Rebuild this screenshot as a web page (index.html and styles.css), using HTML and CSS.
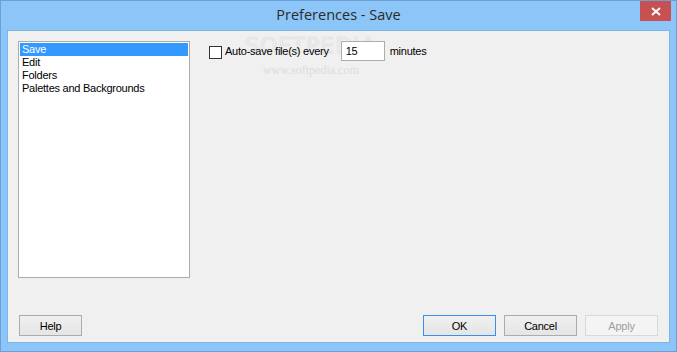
FILE: index.html
```html
<!DOCTYPE html>
<html lang="en">
<head>
    <meta charset="UTF-8">
    <title>Preferences - Save</title>
    <link rel="stylesheet" href="styles.css">
</head>
<body>
    <div class="window">
        <div class="titlebar">
            <span class="title">Preferences - Save</span>
            <button class="close" aria-label="Close">
                <svg width="10" height="9" viewBox="0 0 10 9"><path d="M1 1 L9 8 M9 1 L1 8" stroke="#fff" stroke-width="2"/></svg>
            </button>
        </div>
        <div class="client">
            <div class="mark">
                <span class="big">SOFTPEDIA</span>
                <span class="url">www.softpedia.com</span>
            </div>
            <div class="main">
                <ul class="pages">
                    <li class="selected">Save</li>
                    <li>Edit</li>
                    <li>Folders</li>
                    <li>Palettes and Backgrounds</li>
                </ul>
                <div class="options">
                    <label class="row">
                        <span class="check"></span>
                        <span class="label">Auto-save file(s) every</span>
                        <span class="field">15</span>
                        <span class="unit">minutes</span>
                    </label>
                </div>
            </div>
            <div class="buttons">
                <button class="btn">Help</button>
                <span class="spacer"></span>
                <button class="btn default">OK</button>
                <button class="btn">Cancel</button>
                <button class="btn" disabled>Apply</button>
            </div>
        </div>
    </div>
</body>
</html>
```

FILE: styles.css
```css
body{
    margin: 0;
    font-family: "Liberation Sans", Arial, sans-serif;
    font-size: 11px;
    letter-spacing: -0.25px;
    color: #000;
}
.window{
    width: 677px;
    height: 352px;
    box-sizing: border-box;
    background: #8cc5f7;
    border: 1px solid #6b9fd6;
    display: flex;
    flex-direction: column;
}
.titlebar{
    height: 29px;
    display: flex;
    align-items: flex-start;
    justify-content: center;
    position: relative;
}
.title{
    font-family: "Open Sans", "Noto Sans", sans-serif;
    font-size: 14.5px;
    letter-spacing: 0;
    color: #2b2b2b;
    margin-top: 4px;
}
.close{
    position: absolute;
    top: 0;
    right: 5px;
    width: 31px;
    height: 20px;
    border: none;
    background: #c75050;
    display: flex;
    align-items: center;
    justify-content: center;
    padding: 0;
}
.client{
    flex: 1;
    margin: 0 6px 8px 6px;
    background: #f0f0f0;
    border: 1px solid #7fb4e6;
    display: flex;
    flex-direction: column;
    padding: 10px 11px 6px 10px;
    position: relative;
}
.main{
    display: flex;
    gap: 19px;
    flex: 1;
    position: relative;
}
.pages{
    list-style: none;
    margin: 0;
    padding: 1px;
    width: 168px;
    height: 233px;
    background: #fff;
    border: 1px solid #acacac;
}
.pages li{
    height: 13px;
    line-height: 13px;
    padding-left: 2px;
}
.pages .selected{
    background: #3399ff;
    color: #fff;
}
.row{
    display: flex;
    align-items: center;
}
.check{
    width: 11px;
    height: 11px;
    border: 1px solid #333;
    background: #fff;
    margin-top: 2px;
}
.label{
    margin-left: 3px;
}
.field{
    width: 38px;
    height: 18px;
    line-height: 18px;
    border: 1px solid #abadb3;
    background: #fff;
    margin-left: 12px;
    padding-left: 4px;
}
.unit{
    margin-left: 5px;
}
.buttons{
    display: flex;
    gap: 8px;
    height: 21px;
}
.spacer{
    flex: 1;
}
.btn{
    width: 73px;
    height: 21px;
    box-sizing: border-box;
    font-family: "Liberation Sans", Arial, sans-serif;
    font-size: 11px;
    letter-spacing: -0.25px;
    background: linear-gradient(#f0f0f0, #e5e5e5);
    border: 1px solid #acacac;
    padding: 0;
    color: #000;
}
.btn:first-child{
    width: 63px;
    margin-left: 1px;
}
.btn.default{
    border-color: #3c8fe6;
}
.btn:disabled{
    color: #9e9e9e;
    background: #f4f4f4;
    border-color: #d9d9d9;
}
.mark{
    position: absolute;
    left: 237px;
    top: 2px;
    display: flex;
    flex-direction: column;
    align-items: center;
    pointer-events: none;
    letter-spacing: 0;
}
.mark .big{
    font-family: "DejaVu Sans", sans-serif;
    font-size: 22px;
    letter-spacing: 1px;
    color: transparent;
    -webkit-text-stroke: 1px #e3e3e3;
}
.mark .url{
    font-family: "Liberation Serif", serif;
    font-size: 12px;
    color: #dcdcdc;
    margin-top: 5px;
}
```
